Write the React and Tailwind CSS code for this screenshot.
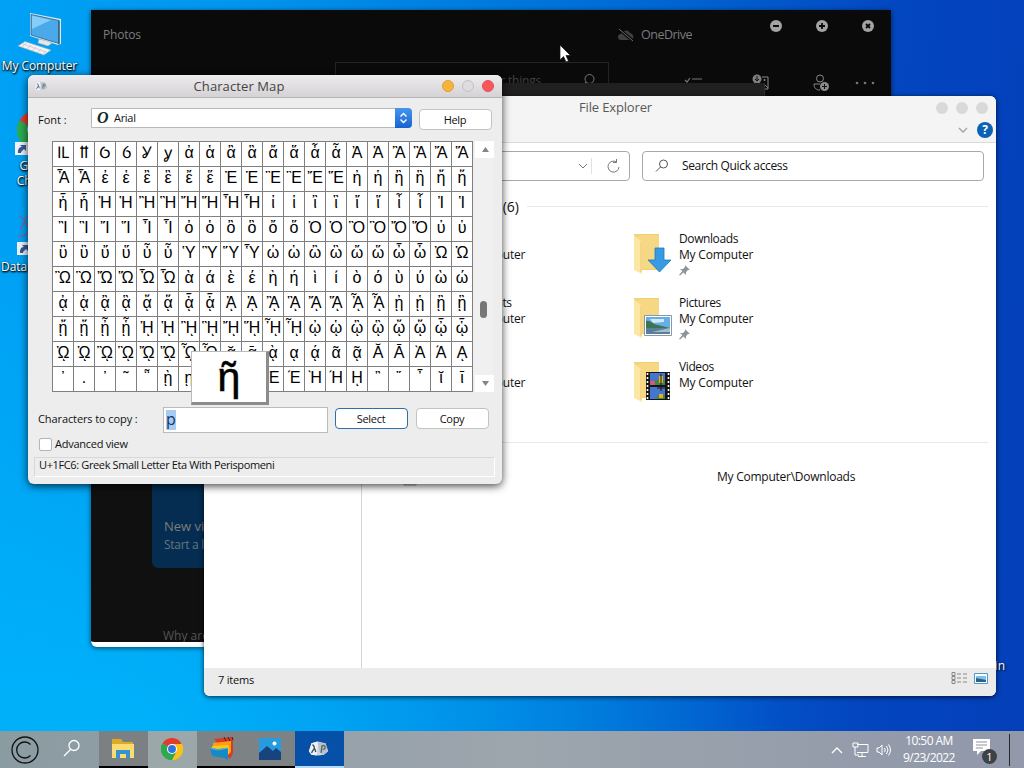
import React from 'react';

// code point ranges in the order the map lists them
const RANGES = [
  [0x1efa, 0x1f15], [0x1f18, 0x1f1d], [0x1f20, 0x1f45], [0x1f48, 0x1f4d],
  [0x1f50, 0x1f57], [0x1f59, 0x1f59], [0x1f5b, 0x1f5b], [0x1f5d, 0x1f5d],
  [0x1f5f, 0x1f7d], [0x1f80, 0x1fb4], [0x1fb6, 0x1fc4], [0x1fc6, 0x1fd1],
];

const CHARS = RANGES.flatMap(([from, to]) =>
  Array.from({ length: to - from + 1 }, (_, i) => String.fromCodePoint(from + i))
);

const DesktopIcon = ({ className, label, children }) => (
  <div className={`absolute flex flex-col items-center text-center text-white [text-shadow:1px_1px_2px_#000,0_1px_2px_#000] ${className}`}>
    {children}
    <span className="text-[12px] leading-[15px] whitespace-nowrap tracking-[-0.1px]">{label}</span>
  </div>
);

const ComputerIcon = () => (
  <svg width="46" height="46" viewBox="0 0 46 46" className="shrink-0">
    <path d="M13 1l31 6v25l-3 1-28-9z" fill="#d9eaf5" />
    <path d="M14 2.500l28 6v23l-28-8.500z" fill="#4aa9e8" stroke="#2a5f86" strokeWidth=".8" />
    <path d="M15 3.500l19 4.500-19 9z" fill="#86cdf7" />
    <path d="M42 8.500v24" stroke="#33434f" />
    <path d="M22 27l8 2 5 2-4 3-10-3z" fill="#e6e8ea" stroke="#a0a8ae" strokeWidth=".5" />
    <path d="M8 29.500l26 8.500-7 5L1 34z" fill="#f1f2f3" stroke="#a9afb4" strokeWidth=".6" />
    <path d="M6 32l23 8M9 31l-4 4m9-2-4 4m9-2-4 4m9-2-4 4m9-2-4 4" stroke="#b7bcc2" strokeWidth=".6" />
  </svg>
);

const ShortcutBadge = () => (
  <svg width="13" height="13" viewBox="0 0 13 13" className="absolute left-0 bottom-0">
    <path d="M0 0h13v13H0z" fill="#eef1f5" />
    <path d="M3 11c0-4 1-6 4-6V3l4 .500v4L9 6c-2 1-3 2-3 5z" fill="#38589c" />
    <path d="M5 3h6v6L9 7l-4 4-2-2 4-4z" fill="#38589c" />
  </svg>
);

const ChromeIcon = ({ size }) => (
  <svg width={size} height={size} viewBox="0 0 24 24">
    <path d="M12 12L1.600 6A12 12 0 0 1 22.400 6z" fill="#e33b2e" />
    <path d="M12 12L22.400 6A12 12 0 0 1 12 24z" fill="#fbc116" />
    <path d="M12 12v12A12 12 0 0 1 1.600 6z" fill="#2da94f" />
    <path d="M12 6.500h10.700A12 12 0 0 1 12 24l4.800-9.200z" fill="#fbc116" />
    <path d="M7.200 14.700L1.600 6A12 12 0 0 0 12 24l4.800-9.200z" fill="#2da94f" />
    <circle cx="12" cy="12" r="5.500" fill="#fff" />
    <circle cx="12" cy="12" r="4.300" fill="#2b74e2" />
  </svg>
);

const DiceIcon = ({ width, height }) => (
  <svg width={width} height={height} viewBox="0 0 24 18">
    <path d="M4 3l7-2 9 2 3 9-5 4-6 1-8-1-3-4z" fill="#cfd6df" />
    <path d="M4 3l7-2v5l-1 11-6-1-3-4z" fill="#eef2f6" />
    <path d="M11 2l9 1 3 9-5 4-5-3z" fill="#b9c3cf" />
    <path d="M5 5c2 0 2 2 2.500 4L9 13M7 9l-3 5" stroke="#3c4a60" strokeWidth="1.500" fill="none" />
    <path d="M15 14l1-8c4-2 5 4 1 4" stroke="#56675f" strokeWidth="1.600" fill="none" />
  </svg>
);

const PhotosWindow = () => (
  <div className="absolute left-[91px] top-[10px] w-[800px] h-[637px] bg-[#101010] border-b-[5px] border-white rounded-b-md shadow-[0_1px_5px_rgba(0,0,0,0.6)] overflow-hidden text-[#7c7c7c] text-[12px]">
    <div className="flex items-center h-[50px] pl-3 pr-[17px] bg-[#0a0a0a]">
      <span className="flex-1 tracking-[-0.2px]">Photos</span>
      <svg width="18" height="14" viewBox="0 0 18 14" className="mr-[6px]">
        <path d="M4 12a3 3 0 0 1 0-6 5 5 0 0 1 9-1 4 4 0 0 1 2 7z" fill="#404040" />
        <path d="M2 1l14 12" stroke="#0a0a0a" strokeWidth="3" />
        <path d="M2 1l14 12" stroke="#6c6c6c" />
      </svg>
      <span className="w-[129px] tracking-[-0.5px] text-[12.500px]">OneDrive</span>
      <div className="flex gap-[34px] mb-[18px]">
        {['M3 6h6', 'M3 6h6M6 3v6', 'M4 4l4 4M8 4l-4 4'].map((d) => (
          <svg key={d} width="12" height="12" viewBox="0 0 12 12">
            <circle cx="6" cy="6" r="6" fill="#a3a3a3" />
            <path d={d} stroke="#0a0a0a" strokeWidth="1.800" />
          </svg>
        ))}
      </div>
    </div>
    <div className="flex items-start bg-[#0a0a0a] h-[38px] pl-[244px] pt-[2px]">
      <div className="flex justify-end items-center gap-12 w-[274px] h-9 pr-3 border border-[#242424]">
        <span className="-mr-1 pt-[2px] text-[#404040] tracking-[-0.2px]">Search people, places, or things</span>
        <svg width="15" height="15" viewBox="0 0 15 15" className="-ml-1">
          <circle cx="8.500" cy="6" r="4.500" fill="none" stroke="#777" />
          <path d="M5 9l-4 4" stroke="#777" />
        </svg>
      </div>
      <svg width="20" height="20" viewBox="0 0 20 20" className="ml-[74px] mt-[14px]">
        <path d="M2 4l2 2 3-4M9 3h10M9 9h10" stroke="#777" strokeWidth="1.200" fill="none" />
      </svg>
      <svg width="18" height="18" viewBox="0 0 18 18" className="ml-[49px] mt-[12px]">
        <circle cx="5" cy="5" r="4.500" fill="#7d7d7d" />
        <path d="M5 2v5M3 5l2 2 2-2" stroke="#111" fill="none" />
        <path d="M10 3h6v12h-3M11 9l5 5" stroke="#888" fill="none" />
        <circle cx="12.500" cy="6" r="1" fill="#888" />
      </svg>
      <svg width="18" height="18" viewBox="0 0 18 18" className="ml-[42px] mt-[12px]">
        <circle cx="8" cy="4.500" r="3.500" fill="none" stroke="#888" />
        <path d="M8 10H2c0 4 2 6 6 6" fill="none" stroke="#888" />
        <circle cx="12.500" cy="12.500" r="4.500" fill="#8a8a8a" />
        <path d="M10 12.500h5M12.500 10v5" stroke="#111" />
      </svg>
      <svg width="20" height="4" viewBox="0 0 20 4" className="ml-[25px] mt-[19px]">
        <circle cx="2" cy="2" r="1.300" fill="#777" /><circle cx="10" cy="2" r="1.300" fill="#777" /><circle cx="18" cy="2" r="1.300" fill="#777" />
      </svg>
    </div>
    <div className="absolute left-[244px] top-[73px] w-[430px] h-6 bg-[#202020] border-r border-[#303030]" />
    <div className="mt-[267px] ml-[61px] w-[220px] h-[203px] rounded-md bg-[#042d51] pl-3 flex flex-col justify-end pb-[15px]">
      <span className="text-[13px] leading-[19px]">New video</span>
      <span className="leading-[17px] tracking-[-0.3px] text-[#65757f]">Start a local project</span>
    </div>
    <div className="mt-[59px] ml-[72px] text-[12px] text-[#555]">Why are my photos missing?</div>
  </div>
);

const Folder = ({ children }) => (
  <svg width="40" height="46" viewBox="0 0 40 46" className="shrink-0">
    <path d="M1 3h25v36H8z" fill="#f2cf72" />
    <path d="M4 4h22v34H9z" fill="#f6d884" />
    <path d="M1 4l8 7v32l-8-4z" fill="#fce6a3" />
    <path d="M8 11v30" stroke="#ecc566" />
    {children}
  </svg>
);

const ARROW = (
  <path d="M22 17h9v12h7L26.500 41 15 29h7z" fill="#369be2" stroke="#2379bd" strokeWidth=".8" />
);

const LANDSCAPE = (
  <g>
    <path d="M11.500 20.500h27v20h-27z" fill="#fff" stroke="#8a98a6" />
    <path d="M13 22h24v17H13z" fill="#65aee7" />
    <path d="M17 24h14v3l-11 1z" fill="#d3e8f6" />
    <path d="M13 26c5-1 7 4 12 4l12 3H13z" fill="#3d7553" />
    <path d="M13 33h24v6H13z" fill="#587f9b" />
    <path d="M19 37l18-4v4z" fill="#a6bdc9" />
  </g>
);

const FILM = (
  <g>
    <path d="M13 13h24v28H13z" fill="#151515" />
    <path d="M17 14h15v12H17zM17 28h15v12H17z" fill="#4576ce" />
    <path d="M17 22h5v4h-5z" fill="#d65a73" />
    <path d="M22 21h10v5H22zM24 36h8v4h-8z" fill="#3d8549" />
    <path d="M26 17h4v7h-4zM26 35h4v4h-4z" fill="#e3ae28" />
    <path d="M28 15v17M24 29h8" stroke="#29130f" />
    <path d="M14.500 14v27M35.500 14v27" stroke="#fff" strokeWidth="1.600" strokeDasharray="2 2" />
  </g>
);

const FOLDERS = [
  { name: 'Desktop', pinned: true },
  { name: 'Downloads', pinned: true, art: ARROW },
  { name: 'Documents', pinned: true },
  { name: 'Pictures', pinned: true, art: LANDSCAPE },
  { name: 'Music' },
  { name: 'Videos', art: FILM },
];

const ExplorerWindow = () => (
  <div className="absolute left-[204px] top-[96px] w-[792px] h-[600px] rounded-md bg-white shadow-[0_1px_5px_rgba(0,0,0,0.75)] overflow-hidden flex flex-col text-[12px] text-[#111]">
    <div className="h-[47px] shrink-0 bg-[#f4f4f4] border-b border-[#dadada]">
      <div className="flex items-center h-6 pl-[375px] pr-[8px]">
        <span className="flex-1 -mt-0.5 text-[13px] leading-[22px] tracking-[-0.15px] text-[#595959]">File Explorer</span>
        <div className="flex gap-2">
          <span className="size-3 rounded-full bg-[#d9d9d9]" />
          <span className="size-3 rounded-full bg-[#d9d9d9]" />
          <span className="size-3 rounded-full bg-[#d9d9d9]" />
        </div>
      </div>
      <div className="flex items-center justify-end gap-[9px] pr-[3px] pt-[2px]">
        <svg width="10" height="6" viewBox="0 0 10 6"><path d="M1 1l4 4 4-4" fill="none" stroke="#a2a2a2" strokeWidth="1.300" /></svg>
        <span className="size-4 rounded-full bg-[#0b63b6] text-white text-[12px] leading-4 font-bold text-center">?</span>
      </div>
    </div>
    <div className="flex h-10 shrink-0 pt-2 pl-3 gap-3">
      <div className="flex w-[414px] h-[30px] border border-[#a8a8a8] rounded items-center justify-end pr-[9px]">
        <svg width="10" height="6" viewBox="0 0 10 6"><path d="M1 1l4 4 4-4" fill="none" stroke="#777" /></svg>
        <span className="w-px h-4 ml-[3px] mr-[15px] bg-[#e2e2e2]" />
        <svg width="13" height="14" viewBox="0 0 13 14">
          <path d="M9.500 3A5.500 5.500 0 1 0 12 8M9.500 0v3.500H6" fill="none" stroke="#777" />
        </svg>
      </div>
      <div className="flex w-[342px] h-[30px] border border-[#a8a8a8] rounded items-center pl-3">
        <svg width="14" height="14" viewBox="0 0 14 14">
          <circle cx="8.500" cy="5" r="4" fill="none" stroke="#555" />
          <path d="M5.500 8L1 12.500" stroke="#555" />
        </svg>
        <span className="ml-[13px] tracking-[-0.36px]">Search Quick access</span>
      </div>
    </div>
    <div className="flex flex-1 min-h-0">
      <div className="w-[158px] border-r border-[#d4d4d4]" />
      <div className="flex-1 pr-2">
        <div className="flex items-center gap-2 h-[47px] mb-px pl-[90px] text-[14px]">
          <span className="tracking-[-0.1px]">Folders (6)</span>
          <span className="flex-1 h-px bg-[#e8e8e8]" />
        </div>
        <div className="grid grid-cols-[228px_228px] pl-[43px]">
          {FOLDERS.map((folder) => (
            <div key={folder.name} className="flex h-16 gap-[6px]">
              <Folder>{folder.art}</Folder>
              <div className="leading-4 whitespace-nowrap tracking-[-0.2px]">
                <div className="tracking-[-0.4px]">{folder.name}</div>
                <div>My Computer</div>
                {folder.pinned && (
                  <svg width="11" height="11" viewBox="0 0 11 11" className="mt-[2px]">
                    <path d="M6 0l5 5-2 0-2 2v3L4.500 7.500 1 10.500 0 10l3.500-4L1 4h3l2-2z" fill="#8d9397" />
                  </svg>
                )}
              </div>
            </div>
          ))}
        </div>
        <div className="mt-[19px] h-px bg-[#e8e8e8]" />
        <div className="flex pt-[25px] pl-[41px]">
          <svg width="14" height="18" viewBox="0 0 14 18"><path d="M1 1h12v16H1z" fill="#f5f5f5" stroke="#999" /></svg>
          <span className="ml-[300px] tracking-[-0.25px]">My Computer\Downloads</span>
        </div>
      </div>
    </div>
    <div className="flex items-center h-7 shrink-0 pl-[14px] pr-2 bg-[#ebebeb]">
      <span className="flex-1 text-[11px] tracking-[-0.2px] -mt-1">7 items</span>
      <svg width="16" height="13" viewBox="0 0 16 13" className="-mt-2">
        <path d="M1 .500h3v3H1zM1 4.500h3v3H1zM1 8.500h3v3H1zM6 2h4M12 2h4M6 6h4M12 6h4M6 10h4M12 10h4" fill="none" stroke="#888" />
      </svg>
      <svg width="14" height="11" viewBox="0 0 14 11" className="ml-[7px] -mt-2">
        <path d="M.500 .500h13v10H.500z" fill="#fff" stroke="#4e9acb" />
        <path d="M2 3h10v6H2z" fill="#85bee0" /><path d="M2 5l10 2v2H2z" fill="#28628a" />
      </svg>
    </div>
  </div>
);

const MapButton = ({ children, active }) => (
  <button className={`w-[73px] h-[21px] pr-px rounded border bg-white text-[11px] leading-[19px] tracking-[-0.3px] ${active ? 'border-[#2f6ea8]' : 'border-[#c3c3c3]'}`}>
    {children}
  </button>
);

const CharacterMap = () => (
  <div className="absolute left-[28px] top-[75px] w-[474px] h-[409px] rounded-md bg-[#ededed] shadow-[0_2px_8px_rgba(0,0,0,0.75)] text-[11px] text-[#111]">
    <div className="flex items-center h-[23px] px-[6px] pr-2 rounded-t-md border-b border-[#b5b5b5] bg-linear-to-b from-[#eeecee] to-[#d4d2d4]">
      <DiceIcon width={14} height={10} />
      <span className="flex-1 text-center text-[13px] text-[#444] pr-[12px] pt-px tracking-[0.1px]">Character Map</span>
      <div className="flex gap-2">
        <span className="size-3 rounded-full bg-[#f8b436] border border-[#dda03c]" />
        <span className="size-3 rounded-full bg-[#dedcde] border border-[#c2c0c2]" />
        <span className="size-3 rounded-full bg-[#f9555a] border border-[#dd5358]" />
      </div>
    </div>
    <div className="flex h-[43px] pl-[10px] pt-[10px]">
      <span className="w-[53px] pt-1">Font :</span>
      <div className="flex items-center w-[321px] h-5 bg-white border border-[#b9b9b9] rounded-r">
        <span className="ml-[5px] w-[17px] font-['Liberation_Serif'] italic font-bold text-[16px] leading-4 text-[#162820]">O</span>
        <span className="flex-1 tracking-[-0.3px]">Arial</span>
        <span className="flex items-center justify-center w-[17px] h-5 -mr-px rounded-r bg-linear-to-b from-[#4795ee] to-[#1563d1]">
          <svg width="9" height="12" viewBox="0 0 9 12"><path d="M1.500 4.500l3-3 3 3M1.500 7.500l3 3 3-3" fill="none" stroke="#fff" strokeWidth="1.400" /></svg>
        </span>
      </div>
      <div className="ml-[7px] mt-px"><MapButton>Help</MapButton></div>
    </div>
    <div className="flex pl-6 gap-px">
      <div className="relative grid grid-cols-[repeat(20,21px)] auto-rows-[25px] w-[421px] h-[251px] border-l border-t border-[#808080] bg-white font-['Liberation_Sans',sans-serif] text-[16px] leading-[22px] text-black">
        {CHARS.map((ch) => (
          <span key={ch} className="flex justify-center border-r border-b border-[#808080] whitespace-nowrap">
            {ch === '\u1fbe' ? '.' : ch}
          </span>
        ))}
        <div className="absolute left-[138px] top-[209px] w-[78px] h-[54px] bg-white border border-[#bbb] border-r-[3px] border-b-[3px] border-r-[#8c8c8c] border-b-[#8c8c8c] text-center text-[41px] leading-[50px] [-webkit-text-stroke:0.6px_black]">ῆ</div>
      </div>
      <div className="flex flex-col items-center justify-between w-[19px] h-[251px] bg-[#f0f0f0]">
        <svg width="19" height="17" viewBox="0 0 19 17" className="ml-[2px] bg-white"><path d="M10.500 6l3.500 5H7z" fill="#858585" /></svg>
        <span className="w-[7px] h-[17px] mt-[143px] mr-px rounded-full bg-[#777]" />
        <svg width="19" height="17" viewBox="0 0 19 17" className="mt-auto ml-[2px] bg-white"><path d="M10.500 11l3.500-5H7z" fill="#858585" /></svg>
      </div>
    </div>
    <div className="flex h-[46px] pl-[10px] pt-[15px]">
      <span className="w-[125px] pt-1 tracking-[-0.1px]">Characters to copy :</span>
      <div className="w-[165px] h-[26px] bg-white border border-[#bcbcbc] pl-[2px] text-[16px] leading-[23px] text-[#163661]">
        <span className="inline-block h-5 mt-[2px] leading-[19px] bg-[#a8cbf2]">p</span>
      </div>
      <div className="flex gap-2 ml-[7px] mt-px">
        <MapButton active>Select</MapButton>
        <MapButton>Copy</MapButton>
      </div>
    </div>
    <div className="flex items-center gap-[3px] h-[13px] pl-[11px]">
      <span className="size-[13px] bg-white border border-[#b5b5b5] rounded-[2px]" />
      <span className="tracking-[-0.25px]">Advanced view</span>
    </div>
    <div className="mt-[6px] ml-[6px] w-[461px] h-5 pl-1 border border-[#d8d8d8] border-b-white border-r-white leading-[13px] tracking-[-0.37px]">
      U+1FC6: Greek Small Letter Eta With Perispomeni
    </div>
  </div>
);

const Taskbar = () => (
  <div className="absolute inset-x-0 bottom-0 flex h-[37px] bg-linear-to-r from-[#8b9ba2] via-[#9da5ad] to-[#9098aa] text-white">
    <div className="flex items-center justify-center w-[49px]">
      <svg width="28" height="28" viewBox="0 0 28 28">
        <circle cx="14" cy="14" r="13" fill="none" stroke="#111" strokeWidth="1.300" />
        <path d="M19.500 8.500a8 8 0 1 0 0 11" fill="none" stroke="#111" strokeWidth="1.300" />
      </svg>
    </div>
    <div className="flex items-center justify-center w-[50px] pr-[4px] pb-[3px]">
      <svg width="18" height="18" viewBox="0 0 18 18">
        <circle cx="11" cy="6.500" r="5" fill="none" stroke="#fff" strokeWidth="1.300" /><path d="M7.500 10.500L1 17" stroke="#fff" strokeWidth="1.300" />
      </svg>
    </div>
    <div className="flex items-center justify-center w-[49px] pr-[2px] bg-[#7b8083] border-b-2 border-black">
      <svg width="24" height="22" viewBox="0 0 24 22">
        <path d="M1 1h9l2 3h10v16H1z" fill="#dfa928" /><path d="M1 6h22v14H1z" fill="#fbdc70" />
        <path d="M5 12h14v8h-4v-4H9v4H5z" fill="#3494d2" />
      </svg>
    </div>
    <div className="flex items-center justify-center w-[49px] pr-[2px] pb-[2px] bg-[#9ca7a9]"><ChromeIcon size={22} /></div>
    <div className="flex items-center justify-center w-[49px] bg-[#7d8385] border-b-2 border-black">
      <svg width="25" height="26" viewBox="0 0 25 26">
        <path d="M5 3l19-2v16l-3 6z" fill="#dc3824" />
        <path d="M4 7l18-2v11l-4 4L4 15z" fill="#ff9d16" />
        <path d="M3 10l17-1v9l-16-3z" fill="#ffc715" />
        <path d="M15 1l2 4M19 1l2 4M23 1l1 3" stroke="#2c2c2c" />
        <path d="M1 12l8 1 10-1v12l-4-2L3 20z" fill="#168ac5" /><path d="M1 12l8 2 10-2" fill="none" stroke="#55b5df" />
      </svg>
    </div>
    <div className="flex items-center justify-center w-[49px] pr-[2px] bg-[#7d8385] border-b-2 border-black">
      <svg width="22" height="22" viewBox="0 0 22 22">
        <path d="M0 0h22v22H0z" fill="#269cdf" /><path d="M0 15l8-7 6 5 3-3 5 4v8H0z" fill="#17437f" /><circle cx="15.500" cy="5.500" r="2" fill="#fff" />
      </svg>
    </div>
    <div className="flex items-center justify-center w-[49px] pr-[2px] bg-[#0650a7] border-b-2 border-[#b7d9f4]"><DiceIcon width={21} height={17} /></div>
    <div className="flex flex-1 items-center justify-end">
      <svg width="12" height="8" viewBox="0 0 12 8"><path d="M1 7l5-5 5 5" fill="none" stroke="#fff" strokeWidth="1.300" /></svg>
      <svg width="17" height="16" viewBox="0 0 17 16" className="ml-[9px]">
        <path d="M5 2.500h11v8H5M10 11v3M6 14.500h8M1 1h5v4H1zM3 5v8h4" fill="none" stroke="#fff" />
      </svg>
      <svg width="15" height="14" viewBox="0 0 15 14" className="ml-[7px]">
        <path d="M1 5h2l3-3v10L3 9H1zM8.500 5q1.500 2 0 4M10.500 3q3 4 0 8M12.500 1.500q4 5.500 0 11" fill="none" stroke="#fff" />
      </svg>
      <div className="ml-[9px] w-[58px] -mt-px text-center text-[12px] leading-[17px] whitespace-nowrap tracking-[-0.55px]">10:50 AM<br />9/23/2022</div>
      <div className="relative ml-[15px] w-6 h-6">
        <svg width="17" height="18" viewBox="0 0 17 18"><path d="M0 1h17v12h-9l-4 4v-4H0z" fill="#fff" /><path d="M3 4h11M3 7h11M3 10h7" stroke="#8f949b" /></svg>
        <span className="absolute right-0 bottom-[-2px] size-[15px] rounded-full bg-[#3e4145] text-[11px] leading-[15px] text-center">1</span>
      </div>
      <span className="ml-[12px] mr-[14px] w-px h-8 bg-[#26282b]" />
    </div>
  </div>
);

export default function App() {
  return (
    <div className="relative w-[1024px] h-[768px] overflow-hidden font-['Open_Sans','Noto_Sans',sans-serif] bg-[linear-gradient(94deg,#00a2f5_0%,#0096ee_22%,#006bd4_58%,#0346c0_84%,#033fb9_100%)]">
      <div className="absolute inset-0 bg-[radial-gradient(ellipse_700px_500px_at_80px_760px,#00b3fa,transparent)]" />
      <DesktopIcon className="left-[2px] top-[12px] w-[75px]" label="My Computer">
        <ComputerIcon />
      </DesktopIcon>
      <DesktopIcon className="left-[13px] top-[111px] w-[52px]" label={<>Google<br />Chrome</>}>
        <div className="relative h-[44px] w-[48px] pl-[2px] pb-[2px]"><ChromeIcon size={38} /><ShortcutBadge /></div>
        <span className="h-[3px]" />
      </DesktopIcon>
      <DesktopIcon className="left-[3px] top-[211px] w-[75px]" label="Data Recovery">
        <div className="relative h-[44px] w-[48px]">
          <svg width="40" height="40" viewBox="0 0 40 40"><path d="M2 5l6 4 6-7M3 19l5-9 5 10M1 26l8-2 6-9M14 2v30" fill="none" stroke="#b84a72" /></svg>
          <ShortcutBadge />
        </div>
        <span className="h-[4px]" />
      </DesktopIcon>
      <span className="absolute right-[19px] top-[658px] text-[12px] leading-4 text-white [text-shadow:1px_1px_2px_#000]">Recycle Bin</span>
      <PhotosWindow />
      <ExplorerWindow />
      <CharacterMap />
      <Taskbar />
      <svg width="12" height="20" viewBox="0 0 12 20" className="absolute left-[559px] top-[44px]">
        <path d="M1 1v15l3.500-3.500L7 18l2.500-1L7 11.500h4.500z" fill="#fff" stroke="#111" strokeWidth=".7" />
      </svg>
    </div>
  );
}
